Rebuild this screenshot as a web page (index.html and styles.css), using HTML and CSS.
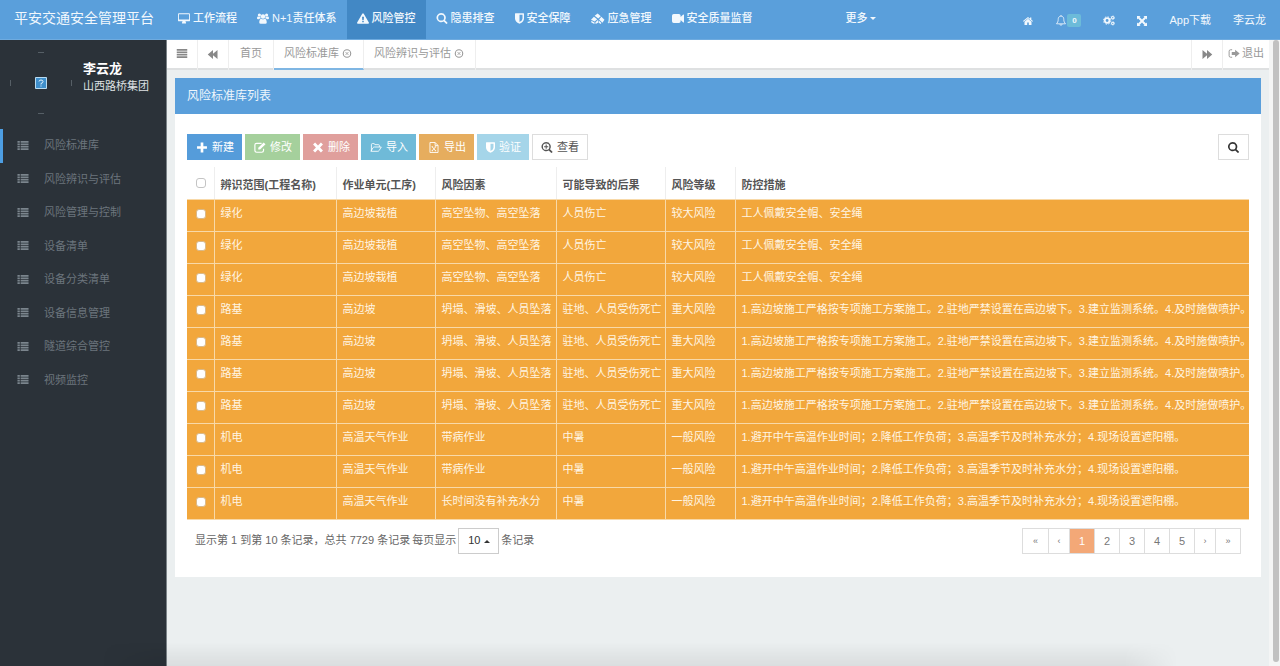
FILE: index.html
```html
<!DOCTYPE html>
<html lang="zh-CN">
<head>
<meta charset="utf-8">
<title>平安交通安全管理平台</title>
<link rel="stylesheet" href="styles.css">
</head>
<body>
<svg class="sprite" aria-hidden="true">
  <symbol id="i-desktop" viewBox="0 0 16 14"><path fill-rule="evenodd" d="M1.3 0h13.4Q16 0 16 1.3v8.2q0 1.3-1.3 1.3H10q.1 1 .8 1.7.2.9-.5 1H5.700q-.7-.1-.5-1 .7-.7.8-1.700H1.300Q0 10.800 0 9.500V1.300Q0 0 1.300 0zM1.200 1.300v6.900h13.600V1.300z"/></symbol>
  <symbol id="i-users" viewBox="0 0 16 14"><circle cx="8" cy="4.400" r="3"/><circle cx="3.200" cy="2.300" r="2.100"/><circle cx="12.800" cy="2.300" r="2.100"/><path d="M3 12.200C3 9 4.200 7.400 5.600 7.200q2.400 1.700 4.800 0C11.800 7.400 13 9 13 12.200q0 1.800-2 1.800H5q-2 0-2-1.800zM0 6.700C0 5 .7 4.200 1.600 4.200q1.300.8 2.800.2.100 1.400.8 2.300-1.400.1-2.400 1.300H1.400Q0 8 0 6.700zM16 6.700c0-1.700-.7-2.500-1.600-2.500q-1.300.8-2.800.2-.1 1.400-.8 2.300 1.400.1 2.400 1.300h1.400Q16 8 16 6.700z"/></symbol>
  <symbol id="i-warn" viewBox="0 0 16 14"><path fill-rule="evenodd" d="M7 .6q1-1.200 2 0l6.800 11.700Q16.300 14 14.800 14H1.200Q-.3 14 .2 12.300zM6.700 4.500l.4 4.700h1.800l.4-4.700zM7 10.200v1.900h2v-1.900z"/></symbol>
  <symbol id="i-search" viewBox="0 0 14 14"><path fill-rule="evenodd" d="M5.900 0a5.900 5.900 0 0 1 4.900 9.200l3 3q.4.700-.2 1.300-.7.700-1.400.300l-3-3A5.900 5.900 0 1 1 5.900 0zm0 2.100a3.800 3.800 0 1 0 0 7.600 3.800 3.800 0 0 0 0-7.600z"/></symbol>
  <symbol id="i-zoomin" viewBox="0 0 14 14"><path fill-rule="evenodd" d="M5.900 0a5.900 5.900 0 0 1 4.900 9.200l3 3q.4.700-.2 1.300-.7.700-1.400.300l-3-3A5.900 5.900 0 1 1 5.900 0zm0 1.800a4.100 4.100 0 1 0 0 8.200 4.100 4.100 0 0 0 0-8.200zM5.300 3.300h1.300v2h2v1.300h-2v2H5.300v-2h-2V5.300h2z"/></symbol>
  <symbol id="i-shield" viewBox="0 0 12 14"><path fill-rule="evenodd" d="M.5 0h11q.5 0 .5.500V7q0 4.200-6 7-6-2.800-6-7V.500Q0 0 .500 0zM6 2v9.700q4-2.100 4-4.800V2z"/></symbol>
  <symbol id="i-cubes" viewBox="0 0 18 14"><path d="M8.500.5L12.600 4l-3.300 3-4.600-3.600zM13.300 4.800l4 3.700-2.600 4-4.300-4.300zM3.800 4.600l4.200 3.300-3.200 2.800L0 8.600zM.300 10l4.300 2-.2 2L.500 12.300zM5.600 12L8.700 9l.8 3-3.500 2zM9.800 9.300l3.600 3.500-1 1.200-2.400-1.500z"/></symbol>
  <symbol id="i-video" viewBox="0 0 16 12"><path d="M2.300 0h6.900q2.300 0 2.300 2.300v1.800L15 .700q1-.400 1 .600v9.400q0 1-1 .6l-3.500-3.400v1.800Q11.500 12 9.200 12H2.300Q0 12 0 9.700V2.300Q0 0 2.300 0z"/></symbol>
  <symbol id="i-home" viewBox="0 0 16 13"><path d="M8 0l3.300 2.700V.900h2v3.500L16 6.600l-.9 1L8 1.900.900 7.600 0 6.600zM8 3l5.600 4.500V13H9.300V9H6.700v4H2.400V7.500z"/></symbol>
  <symbol id="i-bell" viewBox="0 0 14 15"><path d="M7 1.500C4 1.500 3.200 4 3.200 6c0 3-1 4.500-2.400 6h12.400c-1.400-1.500-2.400-3-2.400-6 0-2-.8-4.500-3.800-4.500zM7 0v1.500M5.500 12.500a1.500 1.500 0 0 0 3 0" fill="none" stroke="currentColor" stroke-width="1.100"/></symbol>
  <symbol id="i-cogs" viewBox="0 0 16 14"><g fill="none" stroke="currentColor"><circle cx="5.500" cy="7" r="3.100" stroke-width="2.400"/><circle cx="5.500" cy="7" r="4.900" stroke-width="1.300" stroke-dasharray="2 1.850"/><circle cx="13" cy="3.200" r="1.600" stroke-width="1.400"/><circle cx="13" cy="3.200" r="2.600" stroke-width=".8" stroke-dasharray="1.300 1.420"/><circle cx="13" cy="10.800" r="1.600" stroke-width="1.400"/><circle cx="13" cy="10.800" r="2.600" stroke-width=".8" stroke-dasharray="1.300 1.420"/></g></symbol>
  <symbol id="i-expand" viewBox="0 0 14 14"><path d="M0 0h5L3.500 1.500 7 5l3.500-3.500L9 0h5v5l-1.500-1.500L9 7l3.500 3.500L14 9v5H9l1.500-1.500L7 9l-3.500 3.500L5 14H0V9l1.500 1.500L5 7 1.500 3.500 0 5z"/></symbol>
  <symbol id="i-bars" viewBox="0 0 14 12"><path d="M0 0h14v2.200H0zM0 3.300h14v2.200H0zM0 6.500h14v2.200H0zM0 9.800h14V12H0z"/></symbol>
  <symbol id="i-back" viewBox="0 0 14 12"><path d="M7 0v5l6-5v12L7 7v5L0 6z"/></symbol>
  <symbol id="i-fwd" viewBox="0 0 14 12"><path d="M1 0l6 5V0l7 6-7 6V7l-6 5z"/></symbol>
  <symbol id="i-close" viewBox="0 0 14 14"><circle cx="7" cy="7" r="5.800" fill="none" stroke="currentColor" stroke-width="1.700"/><path d="M4.800 4.800l4.400 4.400M9.200 4.800L4.800 9.200" stroke="currentColor" stroke-width="1.300"/></symbol>
  <symbol id="i-exit" viewBox="0 0 15 12"><path d="M5 1H3Q1 1 1 3v6q0 2 2 2h2" fill="none" stroke="currentColor" stroke-width="1.300"/><path d="M9 1l6 5-6 5V8H4.500V4H9z"/></symbol>
  <symbol id="i-list" viewBox="0 0 16 13"><path d="M0 0h3.400v2.400H0zM4.600 0H16v2.400H4.600zM0 3.500h3.400v2.400H0zM4.600 3.500H16v2.400H4.600zM0 7h3.400v2.400H0zM4.600 7H16v2.400H4.600zM0 10.500h3.400v2.400H0zM4.600 10.500H16v2.400H4.600z"/></symbol>
  <symbol id="i-plus" viewBox="0 0 14 14"><path d="M5.300.700h3.400v4.600h4.600v3.400H8.700v4.600H5.300V8.700H.700V5.300h4.600z"/></symbol>
  <symbol id="i-edit" viewBox="0 0 15 14"><path d="M9.500 1.700H3.200Q1 1.700 1 3.900v7Q1 13 3.200 13h6.600q2.200 0 2.200-2.100V8.600" fill="none" stroke="currentColor" stroke-width="1.500"/><path d="M12.200.500l2.300 2.300-6.900 6.900H5.300V7.400z"/></symbol>
  <symbol id="i-times" viewBox="0 0 14 14"><path d="M3.300.700L7 4.400 10.700.700l2.600 2.600L9.600 7l3.700 3.700-2.600 2.600L7 9.600l-3.700 3.700-2.600-2.600L4.400 7 .700 3.300z"/></symbol>
  <symbol id="i-folder" viewBox="0 0 17 14"><path d="M2 12V2.800Q2 1.500 3.200 1.500h2.500q1 0 1.300 1.500h5q1.300 0 1.300 1.300v1.900M1.200 12.300l3.300-5.200q.6-.8 1.500-.8h10L12.800 11.500q-.6.900-1.600.9H1.200z" fill="none" stroke="currentColor" stroke-width="1.200"/></symbol>
  <symbol id="i-excel" viewBox="0 0 13 15"><path d="M8 .700H1v13.600h11V4.700H8zM8 .700l4 4M4 6.500l4.800 5.500M8.800 6.500L4 12M3.300 6.500h2M7.500 6.500h2M3.300 12h2M7.500 12h2" fill="none" stroke="currentColor" stroke-width="1.200"/></symbol>
</svg>

<header class="topbar">
  <a class="brand" href="#">平安交通安全管理平台</a>
  <nav class="topnav" aria-label="主导航">
    <a href="#"><svg class="ico"><use href="#i-desktop"/></svg>工作流程</a>
    <a href="#"><svg class="ico"><use href="#i-users"/></svg>N+1责任体系</a>
    <a href="#" class="active"><svg class="ico"><use href="#i-warn"/></svg>风险管控</a>
    <a href="#"><svg class="ico"><use href="#i-search"/></svg>隐患排查</a>
    <a href="#"><svg class="ico narrow"><use href="#i-shield"/></svg>安全保障</a>
    <a href="#"><svg class="ico wide"><use href="#i-cubes"/></svg>应急管理</a>
    <a href="#"><svg class="ico"><use href="#i-video"/></svg>安全质量监督</a>
    <a href="#" class="more">更多<span class="caret"></span></a>
  </nav>
  <div class="tools">
    <a href="#" aria-label="主页"><svg class="ico small"><use href="#i-home"/></svg></a>
    <a href="#" aria-label="通知"><svg class="ico"><use href="#i-bell"/></svg><span class="badge">0</span></a>
    <a href="#" aria-label="设置"><svg class="ico"><use href="#i-cogs"/></svg></a>
    <a href="#" aria-label="全屏"><svg class="ico small"><use href="#i-expand"/></svg></a>
    <a href="#">App下载</a>
    <a href="#">李云龙</a>
  </div>
</header>

<div class="shell">
  <aside class="sidebar">
    <div class="profile">
      <svg class="avatar" viewBox="0 0 62 62" role="img" aria-label="头像">
        <path d="M28 .5h6M28 61.500h6M.5 28v6M61.500 28v6" stroke="#565f66"/>
        <path d="M25.500 25.500h11v11h-11z" fill="#3f8fcb" stroke="#b9dcf2"/>
        <path d="M29 29.500q0-1.500 2-1.500t2 1.500-2 2v1M31 33.500v1" fill="none" stroke="#e4f3fc"/>
      </svg>
      <div class="who"><strong>李云龙</strong><span>山西路桥集团</span></div>
    </div>
    <nav class="menu" aria-label="侧边导航">
      <a href="#" class="active"><svg class="ico"><use href="#i-list"/></svg>风险标准库</a>
      <a href="#"><svg class="ico"><use href="#i-list"/></svg>风险辨识与评估</a>
      <a href="#"><svg class="ico"><use href="#i-list"/></svg>风险管理与控制</a>
      <a href="#"><svg class="ico"><use href="#i-list"/></svg>设备清单</a>
      <a href="#"><svg class="ico"><use href="#i-list"/></svg>设备分类清单</a>
      <a href="#"><svg class="ico"><use href="#i-list"/></svg>设备信息管理</a>
      <a href="#"><svg class="ico"><use href="#i-list"/></svg>隧道综合管控</a>
      <a href="#"><svg class="ico"><use href="#i-list"/></svg>视频监控</a>
    </nav>
  </aside>

  <div class="content">
    <div class="tabs">
      <button type="button" class="tab icon" aria-label="菜单"><svg class="ico"><use href="#i-bars"/></svg></button>
      <button type="button" class="tab icon" aria-label="向左"><svg class="ico low"><use href="#i-back"/></svg></button>
      <a href="#" class="tab home">首页</a>
      <a href="#" class="tab current">风险标准库<svg class="ico"><use href="#i-close"/></svg></a>
      <a href="#" class="tab">风险辨识与评估<svg class="ico"><use href="#i-close"/></svg></a>
      <button type="button" class="tab icon end" aria-label="向右"><svg class="ico low"><use href="#i-fwd"/></svg></button>
      <a href="#" class="tab exit"><svg class="ico"><use href="#i-exit"/></svg>退出</a>
    </div>

    <main class="panel">
      <h1>风险标准库列表</h1>
      <div class="body">
        <div class="toolbar">
          <button type="button" class="btn blue"><svg class="ico"><use href="#i-plus"/></svg>新建</button>
          <button type="button" class="btn green"><svg class="ico"><use href="#i-edit"/></svg>修改</button>
          <button type="button" class="btn red"><svg class="ico"><use href="#i-times"/></svg>删除</button>
          <button type="button" class="btn teal"><svg class="ico"><use href="#i-folder"/></svg>导入</button>
          <button type="button" class="btn amber"><svg class="ico"><use href="#i-excel"/></svg>导出</button>
          <button type="button" class="btn sky"><svg class="ico narrow"><use href="#i-shield"/></svg>验证</button>
          <button type="button" class="btn plain"><svg class="ico"><use href="#i-zoomin"/></svg>查看</button>
          <button type="button" class="btn plain find" aria-label="搜索"><svg class="ico"><use href="#i-search"/></svg></button>
        </div>

        <table class="grid">
          <colgroup><col class="c-check"><col class="c-scope"><col class="c-unit"><col class="c-factor"><col class="c-result"><col class="c-level"><col></colgroup>
          <thead>
            <tr><th><input type="checkbox" aria-label="全选"></th><th>辨识范围(工程名称)</th><th>作业单元(工序)</th><th>风险因素</th><th>可能导致的后果</th><th>风险等级</th><th>防控措施</th></tr>
          </thead>
          <tbody>
            <tr><td><input type="checkbox" aria-label="选择第1行"></td><td>绿化</td><td>高边坡栽植</td><td>高空坠物、高空坠落</td><td>人员伤亡</td><td>较大风险</td><td>工人佩戴安全帽、安全绳</td></tr>
            <tr><td><input type="checkbox" aria-label="选择第2行"></td><td>绿化</td><td>高边坡栽植</td><td>高空坠物、高空坠落</td><td>人员伤亡</td><td>较大风险</td><td>工人佩戴安全帽、安全绳</td></tr>
            <tr><td><input type="checkbox" aria-label="选择第3行"></td><td>绿化</td><td>高边坡栽植</td><td>高空坠物、高空坠落</td><td>人员伤亡</td><td>较大风险</td><td>工人佩戴安全帽、安全绳</td></tr>
            <tr><td><input type="checkbox" aria-label="选择第4行"></td><td>路基</td><td>高边坡</td><td>坍塌、滑坡、人员坠落</td><td>驻地、人员受伤死亡</td><td>重大风险</td><td>1.高边坡施工严格按专项施工方案施工。2.驻地严禁设置在高边坡下。3.建立监测系统。4.及时施做喷护。</td></tr>
            <tr><td><input type="checkbox" aria-label="选择第5行"></td><td>路基</td><td>高边坡</td><td>坍塌、滑坡、人员坠落</td><td>驻地、人员受伤死亡</td><td>重大风险</td><td>1.高边坡施工严格按专项施工方案施工。2.驻地严禁设置在高边坡下。3.建立监测系统。4.及时施做喷护。</td></tr>
            <tr><td><input type="checkbox" aria-label="选择第6行"></td><td>路基</td><td>高边坡</td><td>坍塌、滑坡、人员坠落</td><td>驻地、人员受伤死亡</td><td>重大风险</td><td>1.高边坡施工严格按专项施工方案施工。2.驻地严禁设置在高边坡下。3.建立监测系统。4.及时施做喷护。</td></tr>
            <tr><td><input type="checkbox" aria-label="选择第7行"></td><td>路基</td><td>高边坡</td><td>坍塌、滑坡、人员坠落</td><td>驻地、人员受伤死亡</td><td>重大风险</td><td>1.高边坡施工严格按专项施工方案施工。2.驻地严禁设置在高边坡下。3.建立监测系统。4.及时施做喷护。</td></tr>
            <tr><td><input type="checkbox" aria-label="选择第8行"></td><td>机电</td><td>高温天气作业</td><td>带病作业</td><td>中暑</td><td>一般风险</td><td>1.避开中午高温作业时间；2.降低工作负荷；3.高温季节及时补充水分；4.现场设置遮阳棚。</td></tr>
            <tr><td><input type="checkbox" aria-label="选择第9行"></td><td>机电</td><td>高温天气作业</td><td>带病作业</td><td>中暑</td><td>一般风险</td><td>1.避开中午高温作业时间；2.降低工作负荷；3.高温季节及时补充水分；4.现场设置遮阳棚。</td></tr>
            <tr><td><input type="checkbox" aria-label="选择第10行"></td><td>机电</td><td>高温天气作业</td><td>长时间没有补充水分</td><td>中暑</td><td>一般风险</td><td>1.避开中午高温作业时间；2.降低工作负荷；3.高温季节及时补充水分；4.现场设置遮阳棚。</td></tr>
          </tbody>
        </table>

        <div class="footer">
          <span>显示第 1 到第 10 条记录，总共 7729 条记录</span>
          <label for="size">每页显示</label>
          <span class="pick"><select id="size"><option>10</option><option>25</option><option>50</option></select></span>
          <span>条记录</span>
          <nav class="pages" aria-label="分页">
            <a href="#" class="arrow">«</a><a href="#" class="arrow slim">‹</a><a href="#" class="on">1</a><a href="#">2</a><a href="#">3</a><a href="#">4</a><a href="#">5</a><a href="#" class="arrow slim">›</a><a href="#" class="arrow">»</a>
          </nav>
        </div>
      </div>
    </main>
  </div>
  <div class="rail"><div class="thumb"></div></div>
</div>
</body>
</html>
```

FILE: styles.css
```css
* { box-sizing: border-box; }

body {
  margin: 0;
  min-height: 100vh;
  display: flex;
  flex-direction: column;
  background: #ebeff0;
  color: #666;
  font: 11px/1.5 "Liberation Sans", "Noto Sans CJK SC", sans-serif;
}

a { color: inherit; text-decoration: none; }
button, select { font: inherit; color: inherit; }

.sprite { position: absolute; width: 0; height: 0; }
.ico { width: 12px; height: 11px; fill: currentColor; flex: none; }
.ico.narrow { width: 9px; }
.ico.wide { width: 14px; }
.ico.small { width: 10px; height: 10px; }

/* top bar */
.topbar {
  display: flex;
  height: 40px;
  padding-right: 14px;
  background: #5a9fdb;
  border-bottom: 1px solid #6fabdf;
  color: #f2f8fd;
}
.brand {
  width: 168px;
  padding: 0 0 3px 14px;
  display: flex;
  align-items: center;
  font-size: 14px;
  white-space: nowrap;
}
.topnav { display: flex; }
.topnav a {
  display: flex;
  align-items: center;
  gap: 3px;
  padding: 0 10px 2px;
  white-space: nowrap;
  font-weight: 500;
}
.topnav .active { background: #4288c5; }
.topnav .more { margin-left: 73px; gap: 2px; }
.caret { border: 3px solid transparent; border-top-color: currentColor; border-bottom: 0; }
.tools { margin-left: auto; display: flex; align-items: center; gap: 22px; padding-top: 2px; }
.tools a { display: flex; align-items: center; }
.badge {
  min-width: 14px;
  padding: 0 4px;
  border-radius: 2px;
  background: #6cbbd9;
  font-size: 8px;
  font-weight: bold;
  line-height: 13px;
  text-align: center;
}

.shell { flex: 1; display: flex; }

/* sidebar */
.sidebar { width: 167px; flex: none; background: #2b3239; border-right: 1px solid #7b8388; }
.profile { display: flex; gap: 11px; padding: 12px 0 15px 10px; }
.avatar { width: 62px; height: 62px; }
.who { display: flex; flex-direction: column; padding-top: 8px; color: #dfe2e4; white-space: nowrap; line-height: 16px; }
.who strong { font-size: 13px; line-height: 18px; color: #fff; }
.menu { display: flex; flex-direction: column; color: #6b757d; }
.menu a { display: flex; align-items: center; gap: 15px; padding: 8px 0 9px 14px; border-left: 3px solid transparent; }
.menu a.active { border-left-color: #4d9ee3; }
.menu .ico { color: #7b858d; height: 9px; }

/* tabs */
.content { flex: 1; min-width: 0; }
.tabs { display: flex; height: 30px; background: #fff; border-bottom: 2px solid #dee0e1; color: #999; }
.tab {
  display: flex;
  align-items: center;
  gap: 2px;
  height: 30px;
  padding: 0 10px 4px;
  border: 0;
  border-right: 1px solid #eee;
  background: none;
  white-space: nowrap;
}
.tab .ico { height: 9px; }
.tab.icon { width: 31px; padding: 0 9px 4px; color: #888; }
.tab.home { padding: 0 11px 4px; }
.tab .low { margin-top: 3px; }
.tab.current { border-bottom: 2px solid #7fb6e3; padding-bottom: 2px; }
.tab.end { margin-left: auto; border-left: 1px solid #eee; width: 32px; }
.tab.exit { padding: 0 5px 4px; border: 0; }

/* panel */
.panel { margin: 8px 8px 0; background: #fff; }
.panel h1 {
  margin: 0;
  padding: 9px 12px;
  background: #5a9fdb;
  color: #eef6fc;
  font-size: 12px;
  font-weight: normal;
  line-height: 18px;
}
.body { padding: 20px 12px 23px; }
.toolbar { display: flex; gap: 3px; margin-bottom: 7px; }
.btn {
  display: flex;
  align-items: center;
  gap: 4px;
  height: 26px;
  padding: 0 8px 0 9px;
  border: 0;
  color: #fff;
  white-space: nowrap;
}
.blue { background: #559cda; }
.green { background: #a5d09c; }
.red { background: #e09f9c; }
.teal { background: #6fbad8; }
.amber { background: #e6ad5e; }
.sky { background: #a5d5e9; }
.plain { padding: 0 8px; background: #fff; border: 1px solid #ddd; color: #555; }
.find { margin-left: auto; color: #333; }
.find .ico { width: 13px; }

/* records */
.grid { width: 100%; table-layout: fixed; border-collapse: collapse; background: #f2a73c; color: #fff5e3; }
.c-check { width: 27px; }
.c-scope { width: 122px; }
.c-unit { width: 99px; }
.c-factor { width: 121px; }
.c-result { width: 109px; }
.c-level { width: 70px; }
.grid th, .grid td {
  height: 32px;
  padding: 0 0 3px 6px;
  border-left: 1px solid #f8d9a8;
  border-bottom: 1px solid #f8d9a8;
  text-align: left;
  white-space: nowrap;
}
.grid th { padding: 5px 0 0 6px; background: #fff; border-left-color: #eee; color: #555; }
.grid th:first-child, .grid td:first-child { padding-left: 9px; border-left: 0; }
.grid th:first-child { padding-top: 0; }
.grid input {
  appearance: none;
  display: block;
  width: 10px;
  height: 10px;
  margin: 0;
  border: 1px solid #c4c4c4;
  border-radius: 3px;
  background: #fff;
}
.grid td input { border-color: #d9b98a; }

.footer { display: flex; align-items: center; gap: 2px; padding: 8px 8px 0; white-space: nowrap; }
.pick { position: relative; }
.pick::after {
  content: "";
  position: absolute;
  right: 9px;
  top: 12px;
  border: 3px solid transparent;
  border-bottom-color: #333;
  border-top: 0;
  pointer-events: none;
}
.pick select {
  appearance: none;
  display: block;
  width: 41px;
  height: 26px;
  padding: 0 9px;
  border: 1px solid #ccc;
  border-radius: 0;
  background: #fff;
  color: #333;
}
.pages { display: flex; margin-left: auto; border: 1px solid #ddd; }
.pages a { width: 25px; line-height: 24px; text-align: center; color: #777; }
.pages a + a { border-left: 1px solid #ddd; }
.pages .slim { width: 21px; }
.pages .arrow { font-size: 9px; }
.pages .on { background: #f3a877; color: #fff; }

/* scroll rail */
.rail { width: 11px; flex: none; padding: 0 1px 4px 4px; background: #f4f5f5; display: flex; }
.thumb { flex: 1; border-radius: 3px; background: #c1c1c1; }

/* soft shade along the window's lower edge */
body::after {
  content: "";
  position: fixed;
  left: 8%;
  right: 8%;
  bottom: 0;
  height: 24px;
  background: linear-gradient(transparent, rgba(0, 0, 0, .07));
  mask-image: linear-gradient(90deg, transparent, #000 5%, #000 95%, transparent);
  pointer-events: none;
}
```
